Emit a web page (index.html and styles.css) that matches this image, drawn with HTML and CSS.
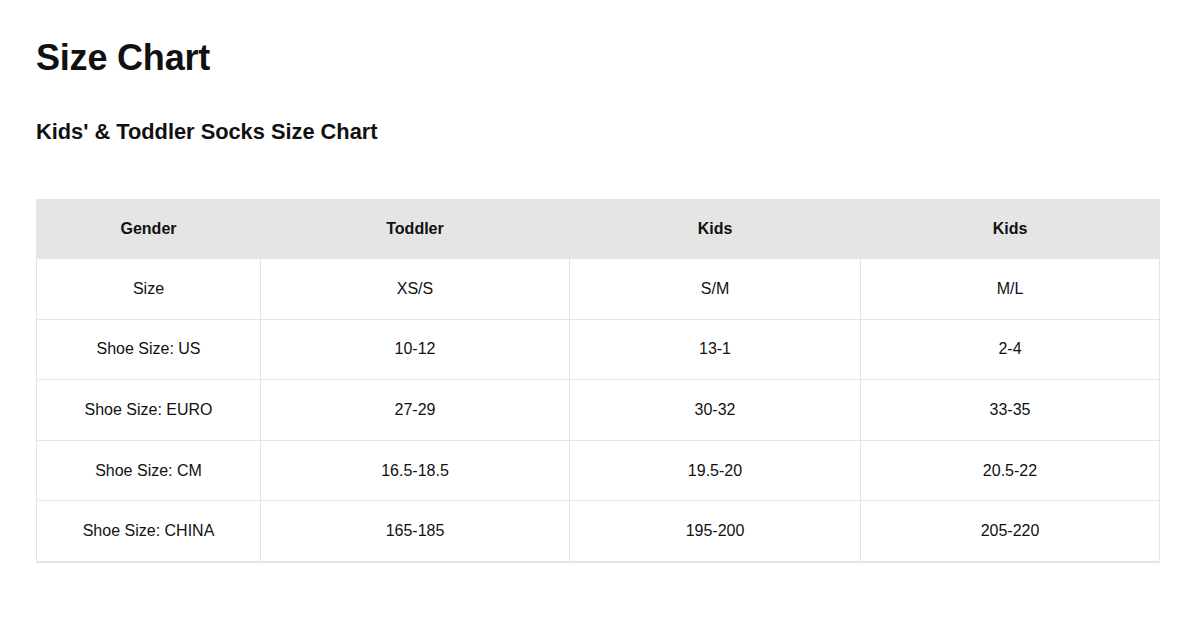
FILE: index.html
```html
<!DOCTYPE html>
<html lang="en">
<head>
<meta charset="utf-8">
<title>Size Chart</title>
<link rel="stylesheet" href="styles.css">
</head>
<body>
<main class="page">
  <h1 class="title">Size Chart</h1>
  <h2 class="subtitle">Kids' &amp; Toddler Socks Size Chart</h2>
  <table class="chart">
    <colgroup>
      <col class="c1"><col class="c2"><col class="c3"><col class="c4">
    </colgroup>
    <thead>
      <tr><th>Gender</th><th>Toddler</th><th>Kids</th><th>Kids</th></tr>
    </thead>
    <tbody>
      <tr><td>Size</td><td>XS/S</td><td>S/M</td><td>M/L</td></tr>
      <tr><td>Shoe Size: US</td><td>10-12</td><td>13-1</td><td>2-4</td></tr>
      <tr><td>Shoe Size: EURO</td><td>27-29</td><td>30-32</td><td>33-35</td></tr>
      <tr><td>Shoe Size: CM</td><td>16.5-18.5</td><td>19.5-20</td><td>20.5-22</td></tr>
      <tr><td>Shoe Size: CHINA</td><td>165-185</td><td>195-200</td><td>205-220</td></tr>
    </tbody>
  </table>
</main>
</body>
</html>
```

FILE: styles.css
```css
html, body {
  margin: 0;
  padding: 0;
  background: #fff;
}
body {
  font-family: "Liberation Sans", Arial, Helvetica, sans-serif;
  color: #111111;
}
.page {
  padding: 36px 33px 0 36px;
}
.title {
  margin: 0;
  font-size: 36px;
  line-height: 43px;
  font-weight: 700;
  letter-spacing: -0.2px;
}
.subtitle {
  margin: 39px 0 0;
  font-size: 21.8px;
  line-height: 27px;
  font-weight: 700;
}
.chart {
  margin-top: 54px;
  width: 1123px;
  table-layout: fixed;
  border-collapse: collapse;
  border-bottom: 2px solid #e5e5e5;
  font-size: 16px;
  line-height: 24px;
}
.c1 { width: 224px; }
.c2 { width: 309px; }
.c3 { width: 291px; }
.c4 { width: 299px; }
.chart th {
  background: #e5e5e5;
  font-weight: 700;
  height: 58px;
  padding: 0 8px;
  text-align: center;
  border: 1px solid #e5e5e5;
}
.chart td {
  height: 59.6px;
  padding: 0 8px;
  text-align: center;
  border: 1px solid #e5e5e5;
}
```
